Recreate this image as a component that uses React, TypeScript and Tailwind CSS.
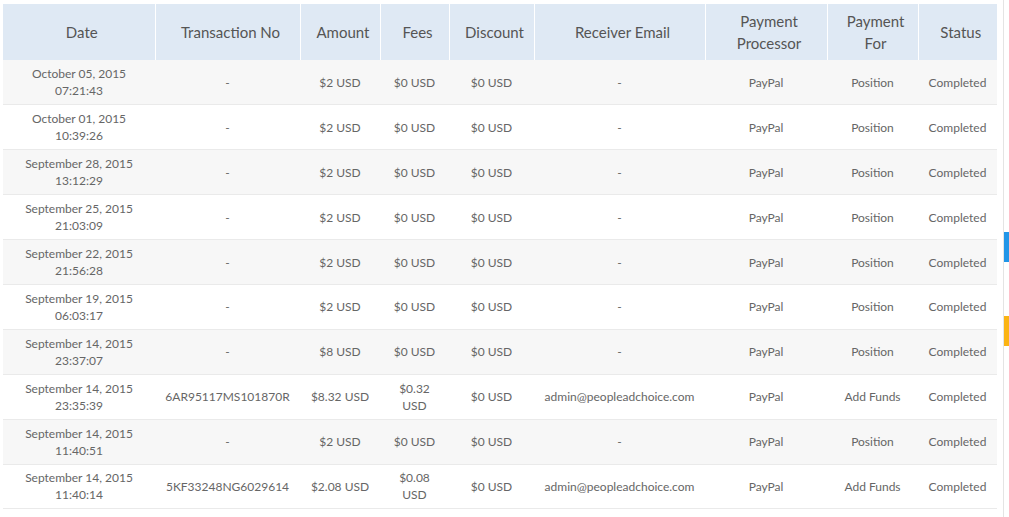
import React from "react";

type Row = {
  date: string;
  time: string;
  txn: string;
  amount: string;
  fees: string;
  discount: string;
  email: string;
  processor: string;
  forWhat: string;
  status: string;
};

const rows: Row[] = [
  { date: "October 05, 2015", time: "07:21:43", txn: "-", amount: "$2 USD", fees: "$0 USD", discount: "$0 USD", email: "-", processor: "PayPal", forWhat: "Position", status: "Completed" },
  { date: "October 01, 2015", time: "10:39:26", txn: "-", amount: "$2 USD", fees: "$0 USD", discount: "$0 USD", email: "-", processor: "PayPal", forWhat: "Position", status: "Completed" },
  { date: "September 28, 2015", time: "13:12:29", txn: "-", amount: "$2 USD", fees: "$0 USD", discount: "$0 USD", email: "-", processor: "PayPal", forWhat: "Position", status: "Completed" },
  { date: "September 25, 2015", time: "21:03:09", txn: "-", amount: "$2 USD", fees: "$0 USD", discount: "$0 USD", email: "-", processor: "PayPal", forWhat: "Position", status: "Completed" },
  { date: "September 22, 2015", time: "21:56:28", txn: "-", amount: "$2 USD", fees: "$0 USD", discount: "$0 USD", email: "-", processor: "PayPal", forWhat: "Position", status: "Completed" },
  { date: "September 19, 2015", time: "06:03:17", txn: "-", amount: "$2 USD", fees: "$0 USD", discount: "$0 USD", email: "-", processor: "PayPal", forWhat: "Position", status: "Completed" },
  { date: "September 14, 2015", time: "23:37:07", txn: "-", amount: "$8 USD", fees: "$0 USD", discount: "$0 USD", email: "-", processor: "PayPal", forWhat: "Position", status: "Completed" },
  { date: "September 14, 2015", time: "23:35:39", txn: "6AR95117MS101870R", amount: "$8.32 USD", fees: "$0.32 USD", discount: "$0 USD", email: "admin@peopleadchoice.com", processor: "PayPal", forWhat: "Add Funds", status: "Completed" },
  { date: "September 14, 2015", time: "11:40:51", txn: "-", amount: "$2 USD", fees: "$0 USD", discount: "$0 USD", email: "-", processor: "PayPal", forWhat: "Position", status: "Completed" },
  { date: "September 14, 2015", time: "11:40:14", txn: "5KF33248NG6029614", amount: "$2.08 USD", fees: "$0.08 USD", discount: "$0 USD", email: "admin@peopleadchoice.com", processor: "PayPal", forWhat: "Add Funds", status: "Completed" },
];

const widths = [152, 145, 80, 69, 85, 171, 122, 91, 79];

export default function App() {
  return (
    <div className="flex w-[1009px] h-[517px] bg-white overflow-hidden font-['Lato','Liberation_Sans',sans-serif]">
      <div className="pl-[3px] pt-[4px] w-[997px]">
        <table className="table-fixed border-collapse w-[994px] text-center">
          <colgroup>
            {widths.map((w, i) => (
              <col key={i} style={{ width: w }} />
            ))}
          </colgroup>
          <thead>
            <tr className="h-[56px] bg-[#dfe9f4] text-[15px] leading-[22px] text-[#555]">
              <th className="pl-[6px] font-normal border-r border-white">Date</th>
              <th className="pl-[6px] font-normal border-r border-white">Transaction No</th>
              <th className="pl-[6px] font-normal border-r border-white">Amount</th>
              <th className="pl-[6px] font-normal border-r border-white">Fees</th>
              <th className="pl-[6px] font-normal border-r border-white">Discount</th>
              <th className="pl-[6px] font-normal border-r border-white">Receiver Email</th>
              <th className="pl-[6px] font-normal border-r border-white">Payment<br />Processor</th>
              <th className="pl-[6px] font-normal border-r border-white">Payment<br />For</th>
              <th className="pl-[6px] font-normal">Status</th>
            </tr>
          </thead>
          <tbody className="text-[12px] leading-[17px] text-[#666]">
            {rows.map((r, i) => (
              <tr key={i} className={`h-[44.9px] border-b border-[#eaeaea] ${i % 2 === 0 ? "bg-[#f7f7f7]" : "bg-white"}`}>
                <td className="px-1">{r.date}<br />{r.time}</td>
                <td>{r.txn}</td>
                <td>{r.amount}</td>
                <td className="px-3">{r.fees}</td>
                <td>{r.discount}</td>
                <td>{r.email}</td>
                <td>{r.processor}</td>
                <td>{r.forWhat}</td>
                <td>{r.status}</td>
              </tr>
            ))}
          </tbody>
        </table>
      </div>
      <div className="ml-[6px] w-[6px] border-l border-[#e4e4e4] flex flex-col">
        <div className="h-[232px]" />
        <div className="h-[30px] bg-[#2196e8]" />
        <div className="h-[54px]" />
        <div className="h-[30px] bg-[#fbb414]" />
      </div>
    </div>
  );
}
